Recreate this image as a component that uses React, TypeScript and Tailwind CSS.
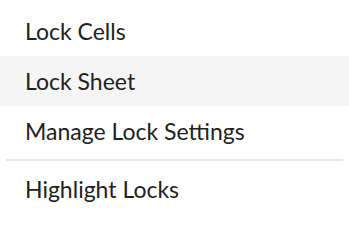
const items = ["Lock Cells", "Lock Sheet", "Manage Lock Settings"];

export default function App() {
  return (
    <div className="w-[349px] h-[219px] bg-white py-[6px] font-['Lato',sans-serif] text-[23px] text-[#222]">
      {items.map((label) => (
        <div
          key={label}
          className={`flex h-[50px] items-center px-[25px] ${label === "Lock Sheet" ? "bg-[#f5f5f5]" : ""}`}
        >
          {label}
        </div>
      ))}
      <div className="mx-[6px] my-[3px] h-[2px] bg-[#e6e6e6]" />
      <div className="flex h-[50px] items-center px-[25px]">Highlight Locks</div>
    </div>
  );
}
